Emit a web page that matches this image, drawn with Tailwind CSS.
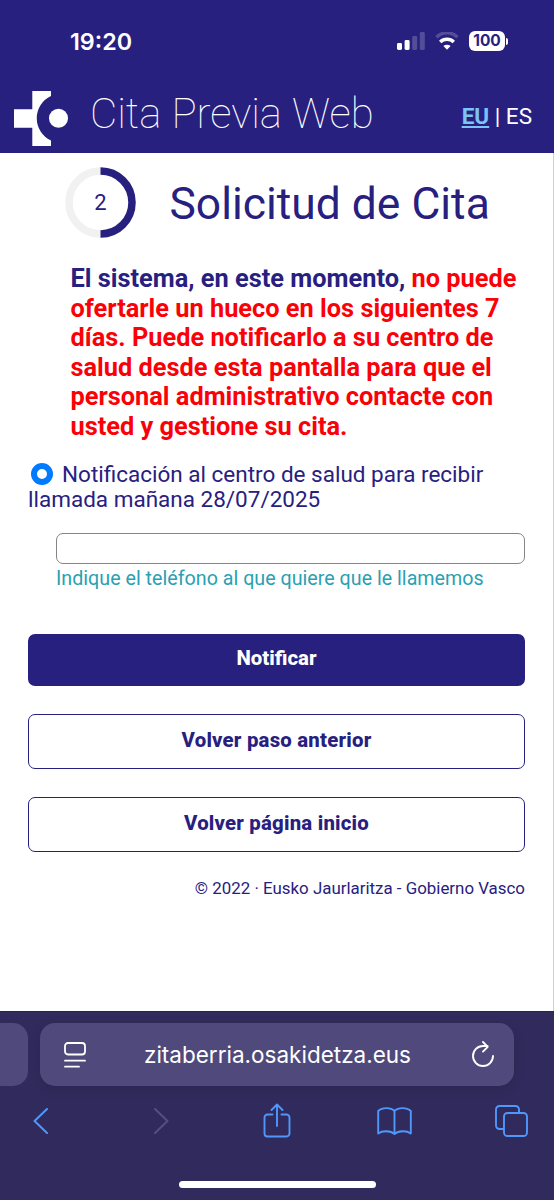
<!DOCTYPE html>
<html lang="es">
<head>
    <meta charset="UTF-8">
    <meta name="viewport" content="width=device-width, initial-scale=1.0">
    <title>Cita Previa Web - Solicitud de Cita</title>
    <script src="https://cdn.jsdelivr.net/npm/@tailwindcss/browser@4"></script>
</head>
<body class="bg-white font-['Roboto',sans-serif] text-[#28207f]">
    <div class="w-[554px] h-[1200px] flex flex-col overflow-hidden">

        <!-- status bar + site header -->
        <header class="h-[153px] shrink-0 bg-[#28207f] text-white">
            <div class="h-[82px] flex items-center justify-between pl-[70px] pr-[46px]">
                <span class="pt-[2px] font-['Inter',sans-serif] font-semibold text-[23.3px] leading-none">19:20</span>
                <div class="flex items-center">
                    <svg class="w-[28px] h-[18px]" viewBox="0 0 28 18">
                        <rect x="0" y="11" width="5" height="7" rx="1.4" fill="#fff"/>
                        <rect x="7.6" y="8" width="5" height="10" rx="1.4" fill="#fff"/>
                        <rect x="15.2" y="4" width="5" height="14" rx="1.4" fill="#544e9a"/>
                        <rect x="22.8" y="0" width="5" height="18" rx="1.4" fill="#544e9a"/>
                    </svg>
                    <svg class="w-[24px] h-[18px] ml-[10px]" viewBox="0 0 24 18">
                        <path d="M1.5 5.2a15 15 0 0 1 21 0" fill="none" stroke="#544e9a" stroke-width="3.4"/>
                        <path d="M5.2 10a9.7 9.7 0 0 1 13.6 0" fill="none" stroke="#fff" stroke-width="3.4"/>
                        <path d="M12 17.8l-3.6-3.7a5.2 5.2 0 0 1 7.2 0z" fill="#fff"/>
                    </svg>
                    <div class="ml-[10px] w-[36px] h-[20px] rounded-[6px] bg-white text-[#28207f] flex items-center justify-center font-['Inter',sans-serif] font-bold text-[15.5px] leading-none">100</div>
                    <div class="w-[2px] h-[7px] ml-px rounded-r-full bg-white"></div>
                </div>
            </div>
            <div class="h-[71px] flex items-start pl-[14px] pr-[22px]">
                <svg class="w-[55px] h-[56px] mt-[9px]" viewBox="0 0 55 56">
                    <path d="M18.3 0H37v5A24.5 24.5 0 0 0 37 49.5V55H18.3V36.7H0V18.3H18.3z" fill="#fff"/>
                    <circle cx="44.5" cy="27.2" r="9.5" fill="#fff"/>
                </svg>
                <h1 class="ml-[21px] mt-[8px] font-thin text-[42px] leading-[48px] whitespace-nowrap">Cita Previa Web</h1>
                <div class="ml-auto mt-[20px] text-[22.5px] leading-[28px] whitespace-nowrap"><a class="font-bold underline text-[#7cc4f5]">EU</a> | ES</div>
            </div>
        </header>

        <main class="h-[858px] shrink-0 border-r border-[#d0d0d4] pl-[28px] pr-[28px]">
            <div class="flex items-center pt-[14px] pl-[37px]">
                <div class="w-[71px] h-[71px] relative flex items-center justify-center">
                    <svg class="absolute inset-0 w-[71px] h-[71px]" viewBox="0 0 71 71" fill="none" stroke-width="7.5">
                        <circle cx="35.5" cy="35.5" r="31.5" stroke="#f1f1f1"/>
                        <path d="M35.5 4a31.5 31.5 0 0 1 0 63" stroke="#28207f"/>
                    </svg>
                    <span class="relative text-[22px] leading-none">2</span>
                </div>
                <h2 class="ml-[33.5px] pt-[2px] text-[44.4px] leading-[52px] whitespace-nowrap">Solicitud de Cita</h2>
            </div>

            <p class="mt-[26px] ml-[42.5px] font-bold text-[25.35px] leading-[29.6px] whitespace-nowrap">El sistema, en este momento, <span class="text-[#fb0007]">no puede<br>ofertarle un hueco en los siguientes 7<br>días. Puede notificarlo a su centro de<br>salud desde esta pantalla para que el<br>personal administrativo contacte con<br>usted y gestione su cita.</span></p>

            <label class="block mt-[20px] text-[22.5px] leading-[25.5px] whitespace-nowrap">
                <span class="inline-block align-[-3px] ml-[3px] mr-[9px] w-[22px] h-[22px] rounded-full border-[6.5px] border-[#007aff]"></span>Notificación al centro de salud para recibir<br>llamada mañana 28/07/2025
            </label>

            <div class="ml-[28px] mt-[20px]">
                <input type="text" class="block w-full h-[31px] rounded-[7px] border border-[#858585] bg-white">
                <small class="block mt-[2px] text-[19.7px] leading-[26px] text-[#2b9fb3] whitespace-nowrap">Indique el teléfono al que quiere que le llamemos</small>
            </div>

            <div class="mt-[42px] flex flex-col gap-[28px] text-[20.4px] font-extrabold [word-spacing:1.5px]">
                <button class="h-[52px] pb-[3px] rounded-[7px] bg-[#28207f] text-white">Notificar</button>
                <button class="h-[55px] pb-px rounded-[7px] border border-[#28207f] tracking-[0.2px]">Volver paso anterior</button>
                <button class="h-[55px] pb-px rounded-[7px] border border-[#28207f] tracking-[0.2px]">Volver página inicio</button>
            </div>

            <footer class="mt-[26px] text-right text-[16.9px] leading-[20px]">© 2022 · Eusko Jaurlaritza - Gobierno Vasco</footer>
        </main>

        <!-- browser toolbar -->
        <nav class="h-[189px] shrink-0 border-t border-[#28244e] bg-[#302b5c] text-white">
            <div class="flex pt-[11px]">
                <div class="w-[28px] h-[63px] rounded-r-[15px] bg-[#504a7c]"></div>
                <div class="ml-[12px] w-[474px] h-[63px] rounded-[15px] bg-[#504a7c] shadow-[0_3px_12px_rgba(0,0,0,0.12)] flex items-center">
                    <svg class="ml-[24px] w-[22px] h-[26px]" viewBox="0 0 22 26" fill="none" stroke="#fff" stroke-width="1.8" stroke-linecap="round">
                        <rect x="1" y="1" width="20" height="11.5" rx="3"/>
                        <path d="M1 18.7h20M1 24.7h14"/>
                    </svg>
                    <span class="flex-1 pt-[2px] pr-[3px] text-center font-['Inter',sans-serif] text-[22.5px] leading-none">zitaberria.osakidetza.eus</span>
                    <svg class="mr-[20px] mb-[2px] w-[22px] h-[26px]" viewBox="0 0 22 26" fill="none" stroke="#fff" stroke-width="1.9" stroke-linecap="round" stroke-linejoin="round">
                        <path d="M21 15a10 10 0 1 1-10-10h4.5M11 1l4.7 4.8-4.7 4.8"/>
                    </svg>
                </div>
            </div>
            <div class="flex items-center h-[44px] mt-[13px] pl-[33px] text-[#4f97fb]">
                <svg class="w-[15px] h-[26px]" viewBox="0 0 15 26" fill="none" stroke="currentColor" stroke-width="2" stroke-linecap="round" stroke-linejoin="round"><path d="M14 1L1.5 13 14 25"/></svg>
                <svg class="ml-[106px] w-[15px] h-[26px]" viewBox="0 0 15 26" fill="none" stroke="#55507b" stroke-width="2" stroke-linecap="round" stroke-linejoin="round"><path d="M1 1l12.5 12L1 25"/></svg>
                <svg class="ml-[94px] w-[28px] h-[36px]" viewBox="0 0 28 36" fill="none" stroke="currentColor" stroke-width="1.9" stroke-linecap="round" stroke-linejoin="round">
                    <path d="M9.500 11.5H4.500a3 3 0 0 0-3 3v16a3 3 0 0 0 3 3h19a3 3 0 0 0 3-3v-16a3 3 0 0 0-3-3h-5M14 23V2M8.500 7L14 1.500 19.500 7"/>
                </svg>
                <svg class="ml-[86px] w-[35px] h-[28px]" viewBox="0 0 35 28" fill="none" stroke="currentColor" stroke-width="1.9" stroke-linecap="round" stroke-linejoin="round">
                    <path d="M17.5 4C14 .2 5 .2 1.2 4v22.5c4-3 12.5-3 16.3.5 3.8-3.5 12.3-3.5 16.3-.5V4C30 .2 21 .2 17.5 4zM17.5 4v23"/>
                </svg>
                <svg class="ml-[83px] w-[33px] h-[32px]" viewBox="0 0 33 32" fill="none" stroke="currentColor" stroke-width="1.9" stroke-linejoin="round">
                    <rect x="9" y="8" width="23" height="23" rx="3.5"/>
                    <path d="M9 24H4.500A3.500 3.500 0 0 1 1 20.500v-16A3.500 3.500 0 0 1 4.500 1h16A3.500 3.500 0 0 1 24 4.500V8"/>
                </svg>
            </div>
            <div class="mt-[38px] ml-[179px] w-[197px] h-[7px] rounded-full bg-white"></div>
        </nav>
    </div>
</body>
</html>
